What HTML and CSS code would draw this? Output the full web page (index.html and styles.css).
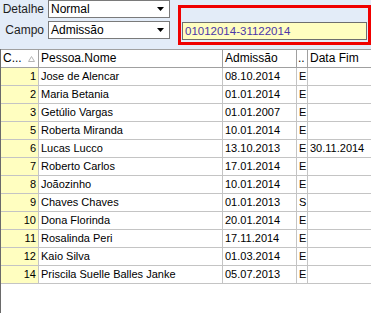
FILE: index.html
```html
<!DOCTYPE html>
<html lang="pt">

<head>
    <meta charset="UTF-8">
    <title>Funcionarios</title>
    <link rel="stylesheet" href="styles.css">
</head>

<body>

    <div class="filters">
        <div class="fields">
            <div class="field">
                <label>Detalhe</label>
                <div class="combo">
                    <span>Normal</span>
                    <svg class="arrow" width="7" height="4" viewBox="0 0 7 4"><path d="M0 0h7L3.5 4z" fill="#000"/></svg>
                </div>
            </div>
            <div class="field">
                <label>Campo</label>
                <div class="combo">
                    <span>Admissão</span>
                    <svg class="arrow" width="7" height="4" viewBox="0 0 7 4"><path d="M0 0h7L3.5 4z" fill="#000"/></svg>
                </div>
            </div>
        </div>
        <div class="highlight">
            <div class="range">01012014-31122014</div>
        </div>
    </div>

    <div class="grid">
        <div class="row head">
            <div class="cell num-head">C...
                <svg class="sort" width="7" height="6" viewBox="0 0 7 6"><path d="M3.5 0.5L6.5 5.5H0.5z" fill="none" stroke="#b4b4b4"/></svg>
            </div>
            <div class="cell">Pessoa.Nome</div>
            <div class="cell">Admissão</div>
            <div class="cell dots">..</div>
            <div class="cell">Data Fim</div>
        </div>
        <div id="rows"></div>
    </div>

    <script>
        const people = [
            [1, 'Jose de Alencar', '08.10.2014', 'E', ''],
            [2, 'Maria Betania', '01.01.2014', 'E', ''],
            [3, 'Getúlio Vargas', '01.01.2007', 'E', ''],
            [5, 'Roberta Miranda', '10.01.2014', 'E', ''],
            [6, 'Lucas Lucco', '13.10.2013', 'E', '30.11.2014'],
            [7, 'Roberto Carlos', '17.01.2014', 'E', ''],
            [8, 'Joãozinho', '10.01.2014', 'E', ''],
            [9, 'Chaves Chaves', '01.01.2013', 'S', ''],
            [10, 'Dona Florinda', '20.01.2014', 'E', ''],
            [11, 'Rosalinda Peri', '17.11.2014', 'E', ''],
            [12, 'Kaio Silva', '01.03.2014', 'E', ''],
            [14, 'Priscila Suelle Balles Janke', '05.07.2013', 'E', '']
        ];

        const rows = document.getElementById('rows');
        people.forEach(p => {
            const row = document.createElement('div');
            row.className = 'row';
            row.innerHTML =
                `<div class="cell num">${p[0]}</div>` +
                `<div class="cell">${p[1]}</div>` +
                `<div class="cell">${p[2]}</div>` +
                `<div class="cell">${p[3]}</div>` +
                `<div class="cell">${p[4]}</div>`;
            rows.appendChild(row);
        });
    </script>

</body>

</html>
```

FILE: styles.css
```css
body {
    margin: 0;
    font-family: 'Liberation Sans', Arial, sans-serif;
    font-size: 11px;
    color: #000;
    background: #ffffff;
}

.filters {
    display: grid;
    grid-template-columns: 170px 1fr;
    height: 49px;
    background-color: #e3ecf8;
}

.fields {
    display: flex;
    flex-direction: column;
    gap: 3px;
}

.field {
    display: flex;
    align-items: center;
}

.field label {
    width: 44px;
    text-align: right;
    padding-right: 4px;
    font-size: 12px;
    color: #1e1e1e;
}

.combo {
    flex: 1;
    height: 18px;
    box-sizing: border-box;
    border: 1px solid #7a7a7a;
    background: #ffffff;
    display: flex;
    align-items: center;
    justify-content: space-between;
    padding: 0 4px 0 2px;
    font-size: 12px;
}

.arrow {
    margin-right: 1px;
}

.highlight {
    height: 40px;
    box-sizing: border-box;
    margin: 5px 0 0 8px;
    border: 3px solid #f00000;
    padding: 14px 1px 0 1px;
}

.range {
    height: 18px;
    box-sizing: border-box;
    border: 1px solid #6e6e6e;
    background: #fffec0;
    color: #4b36a8;
    padding: 0 2px;
    line-height: 16px;
    font-size: 11.5px;
}

.grid {
    border-left: 1px solid #6a6a6a;
    height: 264px;
}

.row {
    display: grid;
    grid-template-columns: 38px 184px 74px 11px 1fr;
    height: 18px;
    box-sizing: border-box;
    border-bottom: 1px solid #c4c4c4;
}

.row.head {
    height: 19px;
    border-top: 1px solid #a0a0a0;
    border-bottom: 1px solid #a0a0a0;
    background: #ffffff;
}

.cell {
    border-right: 1px solid #c4c4c4;
    padding: 0 2px;
    line-height: 17px;
    white-space: nowrap;
    overflow: hidden;
}

.head .cell {
    border-right-color: #a0a0a0;
    font-size: 12px;
}

.head .cell:last-child,
.row .cell:last-child {
    border-right: none;
}

.num-head {
    display: flex;
    align-items: center;
    gap: 6px;
}

.dots {
    padding: 0 1px;
}

.num {
    background: #fffec0;
    text-align: right;
    padding-right: 2px;
}
```
